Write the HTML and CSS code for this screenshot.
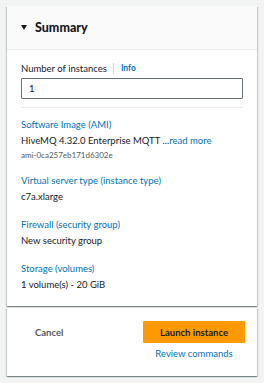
FILE: index.html
```html
<!DOCTYPE html>
<html lang="en">

<head>
    <meta charset="UTF-8">
    <meta name="viewport" content="width=device-width, initial-scale=1.0">
    <title>Summary</title>
    <link rel="stylesheet" href="styles.css">
</head>

<body>
    <div class="panel">
        <div class="panel-header">
            <span class="caret"></span>
            <h2>Summary</h2>
        </div>
        <div class="panel-body">
            <div class="field-label">
                <span>Number of instances</span>
                <a class="info" href="#">Info</a>
            </div>
            <input class="count" type="text" value="1">
            <div class="divider"></div>

            <div class="item">
                <a class="item-title" href="#">Software Image (AMI)</a>
                <div class="item-value">HiveMQ 4.32.0 Enterprise MQTT ...<a href="#">read more</a></div>
                <div class="item-sub">ami-0ca257eb171d6302e</div>
            </div>
            <div class="item">
                <a class="item-title" href="#">Virtual server type (instance type)</a>
                <div class="item-value">c7a.xlarge</div>
            </div>
            <div class="item">
                <a class="item-title" href="#">Firewall (security group)</a>
                <div class="item-value">New security group</div>
            </div>
            <div class="item">
                <a class="item-title" href="#">Storage (volumes)</a>
                <div class="item-value">1 volume(s) - 20 GiB</div>
            </div>
        </div>
    </div>

    <div class="panel footer">
        <button class="cancel">Cancel</button>
        <div class="actions">
            <button class="launch">Launch instance</button>
            <a class="review" href="#">Review commands</a>
        </div>
    </div>
</body>

</html>
```

FILE: styles.css
```css
body {
    font-family: 'Lato', sans-serif;
    font-size: 9.5px;
    background: #f2f3f3;
    color: #16191f;
    margin: 0;
    padding: 6px 7px;
}

a {
    color: #0073bb;
    text-decoration: none;
}

.panel {
    background: #fff;
    box-shadow: 0 1px 1px rgba(0, 28, 36, 0.3), 1px 1px 1px rgba(0, 28, 36, 0.15), -1px 1px 1px rgba(0, 28, 36, 0.15);
}

.panel-header {
    display: flex;
    align-items: center;
    height: 43px;
    padding: 0 14px;
    background: #fafafa;
    border-bottom: 1px solid #eaeded;
}

.caret {
    width: 0;
    height: 0;
    border-left: 3px solid transparent;
    border-right: 3px solid transparent;
    border-top: 5px solid #16191f;
    margin-right: 8px;
}

h2 {
    margin: 0;
    font-size: 12.5px;
    font-weight: 900;
}

.panel-body {
    padding: 10px 14px 13px;
}

.field-label {
    display: flex;
    align-items: center;
    height: 16px;
}

.info {
    font-size: 8.5px;
    font-weight: 700;
    border-left: 1px solid #d5dbdb;
    margin-left: 6px;
    padding-left: 7px;
    line-height: 11px;
}

.count {
    display: block;
    box-sizing: border-box;
    width: 100%;
    height: 21px;
    margin: 2px 0 0;
    padding: 0 7px;
    border: 1px solid #687078;
    border-radius: 1px;
    font-family: inherit;
    font-size: 9.5px;
    color: #16191f;
}

.divider {
    height: 1px;
    background: #e9ebed;
    margin: 8px 0 9px;
}

.item {
    margin-bottom: 12px;
}

.item:last-child {
    margin-bottom: 0;
}

.item-title,
.item-value {
    display: block;
    line-height: 16px;
}

.item-sub {
    font-size: 8px;
    color: #545b64;
    line-height: 12px;
}

.footer {
    margin-top: 2px;
    display: flex;
    justify-content: space-between;
    padding: 13px 12px 14px 14px;
}

.cancel {
    background: none;
    border: none;
    font-family: inherit;
    font-size: 9.5px;
    font-weight: 700;
    color: #545b64;
    padding: 0 14px;
    height: 22px;
    cursor: pointer;
}

.actions {
    display: flex;
    flex-direction: column;
    align-items: center;
}

.launch {
    width: 102px;
    height: 22px;
    background: #ff9900;
    border: none;
    border-radius: 1px;
    font-family: inherit;
    font-size: 9.5px;
    font-weight: 700;
    color: #16191f;
    cursor: pointer;
}

.review {
    margin-top: 3px;
    line-height: 16px;
}
```
